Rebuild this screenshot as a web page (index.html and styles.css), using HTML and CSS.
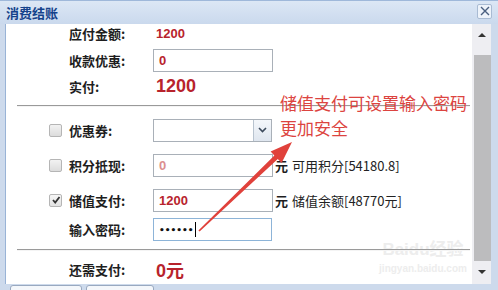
FILE: index.html
```html
<!DOCTYPE html>
<html lang="zh">
<head>
    <meta charset="UTF-8">
    <title>消费结账</title>
    <link rel="stylesheet" href="styles.css">
</head>
<body>
    <div class="window">
        <div class="titlebar">
            <span class="title">消费结账</span>
            <span class="close">
                <svg width="10" height="10" viewBox="0 0 10 10"><path d="M1 1L9 9M9 1L1 9" stroke="#4a5f80" stroke-width="1.4"/></svg>
            </span>
        </div>
        <div class="frame">
            <div class="panel">
                <div class="watermark">
                    <span class="wm-logo">Baidu经验</span>
                    <span class="wm-url">jingyan.baidu.com</span>
                </div>

                <div class="form">
                    <div class="row r1">
                        <span class="check none"></span>
                        <span class="label">应付金额:</span>
                        <span class="amount">1200</span>
                    </div>
                    <div class="row r2">
                        <span class="check none"></span>
                        <span class="label">收款优惠:</span>
                        <span class="field red">0</span>
                    </div>
                    <div class="row r3">
                        <span class="check none"></span>
                        <span class="label">实付:</span>
                        <span class="amount big">1200</span>
                    </div>
                    <div class="rule"></div>
                    <div class="row r4">
                        <span class="check"></span>
                        <span class="label">优惠券:</span>
                        <span class="field select">
                            <span class="drop">
                                <svg width="9" height="6" viewBox="0 0 9 6"><path d="M1 1L4.5 4.5L8 1" fill="none" stroke="#3c4a5c" stroke-width="1.6"/></svg>
                            </span>
                        </span>
                    </div>
                    <div class="row r5">
                        <span class="check"></span>
                        <span class="label">积分抵现:</span>
                        <span class="field pale">0</span>
                        <span class="unit">元</span>
                        <span class="hint">可用积分[54180.8]</span>
                    </div>
                    <div class="row r6">
                        <span class="check on">
                            <svg width="10" height="10" viewBox="0 0 10 10"><path d="M2 5L4.2 7.5L8.5 2" fill="none" stroke="#333" stroke-width="1.8"/></svg>
                        </span>
                        <span class="label">储值支付:</span>
                        <span class="field red">1200</span>
                        <span class="unit">元</span>
                        <span class="hint">储值余额[48770元]</span>
                    </div>
                    <div class="row r7">
                        <span class="check none"></span>
                        <span class="label">输入密码:</span>
                        <span class="field focus"><span class="dots">••••••</span><span class="caret"></span></span>
                    </div>
                    <div class="rule rule2"></div>
                    <div class="row r8">
                        <span class="check none"></span>
                        <span class="label">还需支付:</span>
                        <span class="amount big">0元</span>
                    </div>
                </div>
            </div>
            <div class="scrollbar">
                <span class="arrow-up"></span>
                <span class="thumb"></span>
                <span class="arrow-down"></span>
            </div>
        </div>
        <div class="footer">
            <span class="tab"></span>
            <span class="tab tab2"></span>
        </div>

        <div class="note">储值支付可设置输入密码<br>更加安全</div>
        <svg class="pointer" width="498" height="290" viewBox="0 0 498 290">
            <polygon points="292,142 281.6,163 277.8,159 199.6,231.6 198.4,230.4 274.4,155.4 270.6,151.4" fill="#e0413b"/>
        </svg>
    </div>
</body>
</html>
```

FILE: styles.css
```css
body {
    margin: 0;
    background: #cfdcee;
    font-family: "Noto Sans CJK SC", "Liberation Sans", sans-serif;
}
.window {
    position: relative;
    width: 498px;
    height: 290px;
    background: #cddaec;
    overflow: hidden;
}
.titlebar {
    height: 24px;
    display: flex;
    align-items: center;
    justify-content: space-between;
    padding: 0 6px 0 6px;
    box-sizing: border-box;
    background: linear-gradient(#dce7f5, #cad9ed);
    border-top: 1px solid #9fb8da;
}
.title {
    font-size: 13px;
    font-weight: bold;
    color: #15428b;
    line-height: 1;
}
.close {
    width: 13px;
    height: 13px;
    margin-top: -3px;
    border: 1px solid #a9bbd3;
    border-radius: 2px;
    background: #eef3fa;
    display: flex;
    align-items: center;
    justify-content: center;
}
.frame {
    display: flex;
    height: 260px;
    margin: 0 7px 0 5px;
    border-left: 1px solid #99b3d6;
}
.panel {
    position: relative;
    width: 466px;
    background: #fff;
    overflow: hidden;
}
.form {
    position: relative;
    display: flex;
    flex-direction: column;
}
.row {
    display: flex;
    align-items: center;
    height: 24px;
    padding-left: 43px;
}
.r1 { height: 18px; }
.r2 { margin-top: 6px; }
.r3 { margin-top: 3px; height: 22px; }
.r4 { margin-top: 11px; }
.r5 { margin-top: 11px; }
.r6 { margin-top: 11px; }
.r7 { margin-top: 6px; height: 23px; }
.r8 { margin-top: 8px; height: 20px; }
.rule {
    margin: 8px 2px 0 11px;
    border-top: 1px solid #9a9a9a;
    border-bottom: 1px solid #f4f4f4;
}
.rule2 { margin-top: 8px; }
.check {
    width: 11px;
    height: 11px;
    border: 1px solid #b5b5b5;
    border-radius: 2px;
    background: linear-gradient(#f2f2f2, #dcdcdc);
    margin-right: 7px;
    display: flex;
    align-items: center;
    justify-content: center;
    flex: none;
}
.check.none {
    visibility: hidden;
}
.check.on {
    background: linear-gradient(#f6f6f6, #e2e2e2);
}
.label {
    width: 84px;
    font-size: 13px;
    font-weight: bold;
    color: #1e1e1e;
    flex: none;
}
.amount {
    font-family: "Liberation Sans", sans-serif;
    font-size: 13px;
    font-weight: bold;
    color: #b8232c;
    padding-left: 3px;
}
.amount.big {
    font-size: 18px;
    font-family: "Liberation Sans", "Noto Sans CJK SC", sans-serif;
}
.field {
    position: relative;
    width: 120px;
    height: 23px;
    box-sizing: border-box;
    border: 1px solid #a9b0b8;
    background: #fff;
    display: flex;
    align-items: center;
    padding-left: 5px;
    font-family: "Liberation Sans", sans-serif;
    font-size: 13px;
    font-weight: bold;
    flex: none;
}
.field.red {
    color: #b8232c;
}
.field.pale {
    color: #dc8f8f;
}
.field.select {
    width: 119px;
    justify-content: flex-end;
    padding: 0;
}
.drop {
    width: 17px;
    height: 21px;
    border-left: 1px solid #b8c3cf;
    background: linear-gradient(#f4f7fb, #dfe6ef);
    display: flex;
    align-items: center;
    justify-content: center;
}
.field.focus {
    border-color: #8db4d8;
    width: 119px;
}
.dots {
    font-family: "DejaVu Sans", sans-serif;
    font-size: 9px;
    font-weight: bold;
    letter-spacing: 0;
    color: #111;
}
.caret {
    width: 1px;
    height: 15px;
    background: #000;
    margin-left: 1px;
}
.unit {
    font-size: 13px;
    font-weight: bold;
    color: #1e1e1e;
    margin-left: 2px;
}
.hint {
    font-size: 13px;
    color: #222;
    margin-left: 4px;
}
.watermark {
    position: absolute;
    left: 372px;
    top: 214px;
    width: 90px;
    display: flex;
    flex-direction: column;
    align-items: center;
    white-space: nowrap;
    color: #ededed;
}
.wm-logo {
    font-family: "Liberation Sans", "Noto Sans CJK SC", sans-serif;
    font-size: 17px;
    line-height: 24px;
    font-weight: bold;
}
.wm-url {
    font-family: "Liberation Sans", sans-serif;
    font-size: 10px;
    line-height: 14px;
    font-weight: bold;
}
.scrollbar {
    width: 19px;
    background: #eeeef2;
    display: flex;
    flex-direction: column;
    align-items: center;
}
.arrow-up,
.arrow-down {
    width: 0;
    height: 0;
    border-left: 4px solid transparent;
    border-right: 4px solid transparent;
}
.arrow-up {
    margin-top: 9px;
    border-bottom: 4px solid #333;
}
.thumb {
    width: 17px;
    margin: 18px 0 0 2px;
    height: 206px;
    background: #bcbcbe;
}
.arrow-down {
    margin-top: 9px;
    border-top: 4px solid #333;
}
.footer {
    display: flex;
    gap: 4px;
    padding: 1px 0 0 10px;
}
.tab {
    width: 70px;
    height: 8px;
    border: 1px solid #99a9c0;
    border-radius: 3px 3px 0 0;
    background: #f4f7fb;
}
.tab2 {
    width: 66px;
}
.note {
    position: absolute;
    left: 280px;
    top: 90px;
    font-size: 17px;
    line-height: 25px;
    color: #dc4440;
}
.pointer {
    position: absolute;
    left: 0;
    top: 0;
}
```
